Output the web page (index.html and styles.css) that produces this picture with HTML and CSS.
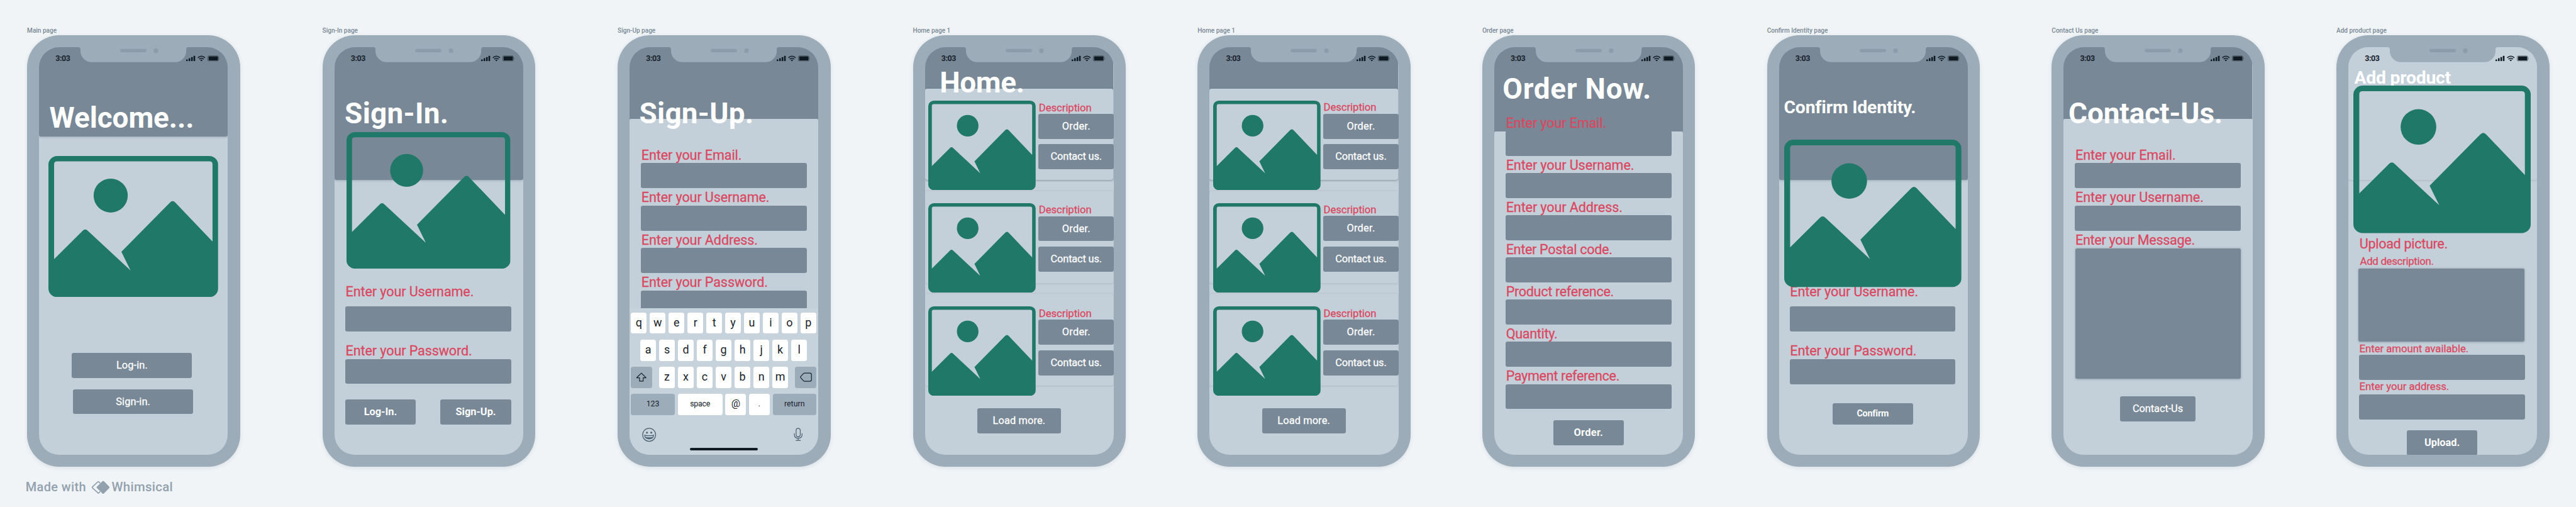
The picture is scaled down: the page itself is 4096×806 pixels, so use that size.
FILE: index.html
```html
<!DOCTYPE html>
<html lang="en">
<head>
<meta charset="utf-8">
<title>Shop app wireframes</title>
<link rel="stylesheet" href="styles.css">
</head>
<body>
<svg class="sprite" aria-hidden="true">
  <symbol id="picture" viewBox="0 0 338 281" preserveAspectRatio="none">
    <path fill-rule="evenodd" d="M18 0H320A18 17 0 0 1 338 17V264A18 17 0 0 1 320 281H18A18 17 0 0 1 0 264V17A18 17 0 0 1 18 0ZM11.3 205.3L68 149Q73.2 143.6 78.6 149L163.6 227.8L145.3 190.6L241.8 93Q247.5 87 253 93L326.8 170.2V16.6Q326.8 10.8 321 10.8H17Q11.3 10.8 11.3 16.6Z"/>
    <ellipse cx="124" cy="78.8" rx="34" ry="33.8"/>
  </symbol>
  <symbol id="notch" viewBox="0 0 220 32">
    <path class="bezel" d="M0 0V1Q5 1 5 6V9A22 22 0 0 0 27 31H193.500A22 22 0 0 0 215.500 9V6Q215.500 1 220 1V0Z"/>
    <rect class="hole" x="84" y="4.700" width="52.500" height="7" rx="3.500"/>
    <circle class="hole" cx="155.300" cy="8.300" r="4.600"/>
  </symbol>
  <symbol id="indicators" viewBox="0 0 67 12">
    <rect x="0" y="8" width="3.200" height="3.600" rx=".8"/>
    <rect x="5" y="5.600" width="3.200" height="6" rx=".8"/>
    <rect x="9.900" y="3.300" width="3.200" height="8.300" rx=".8"/>
    <rect x="14.700" y=".8" width="3.200" height="10.800" rx=".8"/>
    <g class="waves"><path d="M23.300 4.800Q30.400 -1.700 37.500 4.800"/><path d="M26 7.600Q30.400 3.800 34.800 7.600"/></g>
    <path d="M28 9.400Q30.400 7.600 32.800 9.400L30.400 11.800Z"/>
    <rect class="cell" x="43" y=".8" width="21.400" height="10.800" rx="2.600"/>
    <rect x="45" y="2.300" width="18" height="7.800" rx="1"/>
    <path class="nub" d="M65.600 4.300Q67 5 67 6.200T65.600 8.100Z"/>
  </symbol>
</svg>

<main class="board">
  <div class="phones">

    <section class="frame frame--wide">
      <h2 class="frame-name">Main page</h2>
      <div class="phone"><div class="screen s-main">
        <div class="banner"></div>
        <div class="status"><span>3:03</span><svg><use href="#indicators"/></svg></div>
        <svg class="notch"><use href="#notch"/></svg>
        <h1 class="title">Welcome...</h1>
        <svg class="picture"><use href="#picture"/></svg>
        <div class="button login">Log-in.</div>
        <div class="button signin">Sign-in.</div>
      </div></div>
    </section>

    <section class="frame frame--wide">
      <h2 class="frame-name">Sign-In page</h2>
      <div class="phone"><div class="screen s-signin">
        <div class="banner banner--tall"></div>
        <div class="status"><span>3:03</span><svg><use href="#indicators"/></svg></div>
        <svg class="notch"><use href="#notch"/></svg>
        <h1 class="title">Sign-In.</h1>
        <svg class="picture"><use href="#picture"/></svg>
        <div class="credentials">
          <div class="label">Enter your Username.</div><div class="input"></div>
          <div class="label">Enter your Password.</div><div class="input"></div>
        </div>
        <div class="actions"><div class="button button--bold">Log-In.</div><div class="button button--bold">Sign-Up.</div></div>
      </div></div>
    </section>

    <section class="frame frame--wide">
      <h2 class="frame-name">Sign-Up page</h2>
      <div class="phone"><div class="screen s-signup">
        <div class="banner banner--tall"></div>
        <div class="sheet"></div>
        <div class="status"><span>3:03</span><svg><use href="#indicators"/></svg></div>
        <svg class="notch"><use href="#notch"/></svg>
        <h1 class="title">Sign-Up.</h1>
        <div class="form">
          <div class="label">Enter your Email.</div><div class="input"></div>
          <div class="label">Enter your Username.</div><div class="input"></div>
          <div class="label">Enter your Address.</div><div class="input"></div>
          <div class="label">Enter your Password.</div><div class="input"></div>
        </div>
        <div class="keyboard">
          <div class="keys"><b>q</b><b>w</b><b>e</b><b>r</b><b>t</b><b>y</b><b>u</b><b>i</b><b>o</b><b>p</b></div>
          <div class="keys keys--inset"><b>a</b><b>s</b><b>d</b><b>f</b><b>g</b><b>h</b><b>j</b><b>k</b><b>l</b></div>
          <div class="keys">
            <b class="key-fn key-shift"><svg width="22" height="19" viewBox="0 0 22 19"><path d="M11 1.500L20.300 10.700H14.600V17.500H7.400V10.700H1.700Z"/></svg></b>
            <b>z</b><b>x</b><b>c</b><b>v</b><b>b</b><b>n</b><b>m</b>
            <b class="key-fn key-delete"><svg width="24" height="19" viewBox="0 0 24 19"><path d="M9.300 1.300H19.500Q22.900 1.300 22.900 4.700V14.300Q22.900 17.700 19.500 17.700H9.300Q8 17.700 7 16.700L1.600 10.900Q.6 9.500 1.600 8.100L7 2.300Q8 1.300 9.300 1.300Z"/></svg></b>
          </div>
          <div class="keys keys--words"><b class="key-fn">123</b><b class="key-space">space</b><b class="key-sign key-at">@</b><b class="key-sign">.</b><b class="key-fn">return</b></div>
          <div class="tray">
            <svg width="28" height="28" viewBox="0 0 28 28"><circle cx="14" cy="14" r="13"/><circle class="solid" cx="9.700" cy="9.600" r="1.900"/><circle class="solid" cx="18.300" cy="9.600" r="1.900"/><path d="M5 14.800Q14 17 23 14.800Q22.300 22.300 14 22.300T5 14.800Z"/><path class="solid" d="M6.500 18.200Q14 20.300 21.500 18.200Q19 22 14 22T6.500 18.200Z"/></svg>
            <svg width="18" height="27" viewBox="0 0 18 27"><rect x="4.900" y="1.200" width="8.200" height="16.800" rx="4.100"/><path d="M1.400 11V14Q1.400 20.800 9 20.800T16.600 14V11M9 20.800V25M4 25.200H14"/></svg>
          </div>
          <div class="home-bar"></div>
        </div>
      </div></div>
    </section>

    <section class="frame">
      <h2 class="frame-name">Home page 1</h2>
      <div class="phone"><div class="screen s-home">
        <div class="banner banner--tall"></div>
        <div class="status"><span>3:03</span><svg><use href="#indicators"/></svg></div>
        <svg class="notch"><use href="#notch"/></svg>
        <h1 class="title">Home.</h1>
        <div class="cards">
          <article class="card"><svg class="picture"><use href="#picture"/></svg><div class="info"><p>Description</p><div class="button order">Order.</div><div class="button contact">Contact us.</div></div></article>
          <article class="card"><svg class="picture"><use href="#picture"/></svg><div class="info"><p>Description</p><div class="button order">Order.</div><div class="button contact">Contact us.</div></div></article>
          <article class="card"><svg class="picture"><use href="#picture"/></svg><div class="info"><p>Description</p><div class="button order">Order.</div><div class="button contact">Contact us.</div></div></article>
        </div>
        <div class="button load">Load more.</div>
      </div></div>
    </section>

    <section class="frame">
      <h2 class="frame-name">Home page 1</h2>
      <div class="phone"><div class="screen s-home s-home--untitled">
        <div class="banner banner--tall"></div>
        <div class="status"><span>3:03</span><svg><use href="#indicators"/></svg></div>
        <svg class="notch"><use href="#notch"/></svg>
        <div class="cards">
          <article class="card"><svg class="picture"><use href="#picture"/></svg><div class="info"><p>Description</p><div class="button order">Order.</div><div class="button contact">Contact us.</div></div></article>
          <article class="card"><svg class="picture"><use href="#picture"/></svg><div class="info"><p>Description</p><div class="button order">Order.</div><div class="button contact">Contact us.</div></div></article>
          <article class="card"><svg class="picture"><use href="#picture"/></svg><div class="info"><p>Description</p><div class="button order">Order.</div><div class="button contact">Contact us.</div></div></article>
        </div>
        <div class="button load">Load more.</div>
      </div></div>
    </section>

    <section class="frame">
      <h2 class="frame-name">Order page</h2>
      <div class="phone"><div class="screen s-order">
        <div class="banner banner--tall"></div>
        <div class="sheet"></div>
        <div class="status"><span>3:03</span><svg><use href="#indicators"/></svg></div>
        <svg class="notch"><use href="#notch"/></svg>
        <h1 class="title">Order Now.</h1>
        <div class="form">
          <div class="label">Enter your Email.</div><div class="input"></div>
          <div class="label">Enter your Username.</div><div class="input"></div>
          <div class="label">Enter your Address.</div><div class="input"></div>
          <div class="label label--tight">Enter Postal code.</div><div class="input"></div>
          <div class="label label--tight">Product reference.</div><div class="input"></div>
          <div class="label label--tight">Quantity.</div><div class="input"></div>
          <div class="label label--tight">Payment reference.</div><div class="input"></div>
        </div>
        <div class="button button--bold submit">Order.</div>
      </div></div>
    </section>

    <section class="frame">
      <h2 class="frame-name">Confirm Identity page</h2>
      <div class="phone"><div class="screen s-confirm">
        <div class="banner banner--tall"></div>
        <div class="status"><span>3:03</span><svg><use href="#indicators"/></svg></div>
        <svg class="notch"><use href="#notch"/></svg>
        <h1 class="title title--small">Confirm Identity.</h1>
        <svg class="picture"><use href="#picture"/></svg>
        <div class="credentials">
          <div class="label">Enter your Username.</div><div class="input"></div>
          <div class="label">Enter your Password.</div><div class="input"></div>
        </div>
        <div class="button button--bold submit">Confirm</div>
      </div></div>
    </section>

    <section class="frame">
      <h2 class="frame-name">Contact Us page</h2>
      <div class="phone"><div class="screen s-contact">
        <div class="banner banner--tall"></div>
        <div class="sheet"></div>
        <div class="status"><span>3:03</span><svg><use href="#indicators"/></svg></div>
        <svg class="notch"><use href="#notch"/></svg>
        <h1 class="title">Contact-Us.</h1>
        <div class="form">
          <div class="label">Enter your Email.</div><div class="input"></div>
          <div class="label">Enter your Username.</div><div class="input"></div>
          <div class="label label--tight">Enter your Message.</div><div class="textarea"></div>
        </div>
        <div class="button submit">Contact-Us</div>
      </div></div>
    </section>

    <section class="frame">
      <h2 class="frame-name">Add product page</h2>
      <div class="phone"><div class="screen s-add">
        <div class="banner banner--tall banner--light"></div>
        <div class="status"><span>3:03</span><svg><use href="#indicators"/></svg></div>
        <svg class="notch"><use href="#notch"/></svg>
        <h1 class="title title--small">Add product</h1>
        <svg class="picture"><use href="#picture"/></svg>
        <div class="label label--tight">Upload picture.</div>
        <div class="label label--small label--tight">Add description.</div>
        <div class="textarea"></div>
        <div class="label label--small amount">Enter amount available.</div>
        <div class="input"></div>
        <div class="label label--small address">Enter your address.</div>
        <div class="input input--address"></div>
        <div class="button button--bold submit">Upload.</div>
      </div></div>
    </section>

  </div>

  <footer class="credit">
    <span class="made">Made with</span>
    <svg width="37" height="27" viewBox="0 0 37 27"><path class="outline" d="M13.500 2.300Q14.200 1.600 14.900 2.300L26 12.700Q26.700 13.500 26 14.300L14.900 24.700Q14.200 25.400 13.500 24.700L2.300 14.300Q1.600 13.500 2.300 12.700Z"/><path class="gap" d="M22.900 0L9.300 13.500L22.900 27Z"/><path d="M22.400 1.200Q23.900 -.1 25.400 1.200L36.100 12.200Q37.200 13.500 36.100 14.800L25.400 25.800Q23.900 27.100 22.400 25.800L11.200 14.800Q10.100 13.500 11.200 12.200Z"/></svg>
    <span class="brand">Whimsical</span>
  </footer>
</main>
</body>
</html>
```

FILE: styles.css
```css
:root {
  --paper: #f0f4f7;
  --bezel: #9dacb9;
  --screen: #c3cfd9;
  --block: #788896;
  --green: #207868;
  --red: #db4760;
  --ink: #18222c;
}

* { box-sizing: border-box; margin: 0; }

body {
  background: var(--paper);
  font-family: Roboto, "Liberation Sans", sans-serif;
  overflow: hidden;
}

.sprite { display: block; width: 0; height: 0; }

.board {
  zoom: 0.79844;
  width: 5130px;
  height: 1010px;
  padding: 53.7px 0 0 54px;
}

.phones { display: flex; gap: 143px; }
.frame { flex: none; width: 424px; }
.frame--wide { margin-right: 21px; }

.frame-name {
  height: 16px;
  font-size: 12.6px;
  line-height: 16px;
  font-weight: 500;
  color: var(--block);
  white-space: nowrap;
}

.phone {
  height: 860px;
  padding: 24px;
  border-radius: 64px;
  background: var(--bezel);
  box-shadow: 0 2px 8px rgba(40, 60, 80, .1);
}

.screen {
  position: relative;
  width: 376px;
  height: 812px;
  border-radius: 40px;
  background: var(--screen);
  overflow: hidden;
  display: flex;
  flex-direction: column;
  align-items: flex-start;
}

.screen > * { flex: none; }

/* Backdrops and device chrome, layered around the page content */
.banner, .sheet, .status, .notch, .keyboard { position: absolute; left: 0; }

.banner {
  top: 0;
  width: 375.5px;
  height: 178px;
  background: var(--block);
  border-radius: 0 0 3px 3px;
  box-shadow: 0 1px 4px rgba(50, 70, 90, .3);
}
.banner--tall { height: 264px; }
.banner--light { background: var(--screen); box-shadow: 0 1px 4px rgba(50, 70, 90, .16); }

.sheet {
  top: 143.5px;
  width: 376px;
  height: 140px;
  background: var(--screen);
  border-radius: 3px 3px 0 0;
}

.status {
  top: 0;
  width: 376px;
  height: 44px;
  padding: 17px 16.3px 0 32.6px;
  display: flex;
  justify-content: space-between;
  font-size: 15.5px;
  line-height: 13.4px;
  font-weight: 700;
  letter-spacing: -.5px;
  color: var(--ink);
}
.status svg { width: 67px; height: 12px; fill: #0f1922; }
.waves { fill: none; stroke: #0f1922; stroke-width: 1.9; }
.cell { fill: #0f1922; fill-opacity: .3; stroke: #0f1922; stroke-opacity: .35; }
.nub { opacity: .4; }

.notch { top: -1px; left: 77px; width: 220px; height: 32px; }
.bezel { fill: var(--bezel); }
.hole { fill: #8c9caa; }

/* Shared wireframe parts */
.title, .form, .credentials, .label, .picture, .cards, .button { position: relative; }

.title {
  font-size: 57.5px;
  line-height: 60px;
  font-weight: 700;
  color: #fff;
  white-space: nowrap;
}
.title--small { font-size: 35.5px; line-height: 40px; letter-spacing: -.2px; }

.picture { display: block; fill: var(--green); }

.label {
  height: 34px;
  padding-top: 2px;
  font-size: 27px;
  line-height: 32px;
  font-weight: 400;
  letter-spacing: -.12px;
  color: var(--red);
  white-space: nowrap;
}
.label, .info p, .button:not(.button--bold) { -webkit-text-stroke: .35px currentColor; }
.label--tight { letter-spacing: -.38px; }
.label--small { height: 24px; padding: 0; font-size: 21px; line-height: 24px; letter-spacing: -.05px; }
.label--small.label--tight { letter-spacing: -.35px; }

.input { width: 330.5px; height: 50px; border-radius: 4px; background: var(--block); }
.textarea { border-radius: 3px; background: var(--block); box-shadow: 0 1px 4px rgba(50, 70, 90, .35); }

.form .label, .credentials .label { margin-left: 1px; }

.button {
  height: 50px;
  border-radius: 4px;
  background: var(--block);
  color: #fff;
  font-size: 20.5px;
  line-height: 50px;
  font-weight: 400;
  letter-spacing: .15px;
  text-align: center;
  white-space: nowrap;
}
.button--bold { font-weight: 700; letter-spacing: 0; }

/* Main page */
.s-main .title { margin: 112.3px 0 0 20.4px; letter-spacing: -.1px; }
.s-main .picture { width: 338px; height: 281px; margin: 44.7px 0 0 18.8px; }
.s-main .button { width: 239.4px; }
.s-main .login { margin: 111px 0 0 65.2px; }
.s-main .signin { margin: 22px 0 0 67.4px; }

/* Sign-in and identity pages */
.s-signin .title { margin: 102.7px 0 0 20.5px; letter-spacing: .35px; }
.s-signin .picture { width: 326.4px; height: 272px; margin: 7px 0 0 24.3px; }
.credentials .input { margin-bottom: 21px; }
.credentials .label:first-child { margin-bottom: 12.6px; }
.s-signin .credentials { margin: 27.7px 0 0 21.4px; }
.s-signin .actions { display: flex; justify-content: space-between; width: 330.5px; margin: 10px 0 0 21.4px; }
.s-signin .button { width: 140.6px; }

.s-confirm .title { margin: 100.8px 0 0 9.6px; }
.s-confirm .picture { z-index: 1; width: 353px; height: 293.7px; margin: 44px 0 0 10px; }
.s-confirm .credentials { margin: -9.1px 0 0 21px; }
.s-confirm .submit { width: 160.4px; height: 42.5px; margin: 17.8px 0 0 106.4px; font-size: 17.8px; line-height: 42.5px; letter-spacing: -.15px; }

/* Form pages */
.s-signup .title { margin: 103.3px 0 0 19.2px; letter-spacing: .29px; }
.s-signup .form { margin: 33.7px 0 0 22.3px; }
.s-signup .input { margin-bottom: .5px; }

.s-order .sheet { top: 168px; height: 120px; }
.s-order .title { margin: 53.9px 0 0 16.5px; letter-spacing: .92px; }
.s-order .form { margin: 19.1px 0 0 22.3px; }
.s-order .submit { width: 140.5px; margin: 22px 0 0 117.3px; letter-spacing: .45px; }

.s-contact .title { margin: 103.3px 0 0 9.5px; letter-spacing: -.17px; }
.s-contact .form { margin: 33.7px 0 0 22.3px; }
.s-contact .input { margin-bottom: .5px; }
.s-contact .textarea { width: 329px; height: 259px; margin: 1px 0 0 .7px; }
.s-contact .submit { width: 150.6px; margin: 35px 0 0 112px; letter-spacing: -.1px; }

.s-add .title { margin: 41.4px 0 0 11.7px; letter-spacing: -.3px; }
.s-add .picture { width: 353.3px; height: 294px; margin: -4.4px 0 0 9.7px; }
.s-add .label { margin: 3.4px 0 0 22px; }
.s-add .label--small { margin-top: 6.4px; margin-left: 22.5px; }
.s-add .label--small.label--tight { margin-left: 23px; }
.s-add .textarea { width: 330.6px; height: 145px; margin: 2.2px 0 0 20px; }
.s-add .amount { margin-top: 2.8px; margin-left: 21.7px; }
.s-add .address { margin-top: 1.3px; margin-left: 21.7px; }
.s-add .input { margin-left: 21.3px; }
.s-add .input--address { margin-top: 3.7px; }
.s-add .submit { width: 140.4px; margin: 21px 0 0 116.4px; }

/* Home pages */
.s-home .title { z-index: 1; margin: 41.3px 0 0 29.4px; letter-spacing: -.37px; }
.cards { display: flex; flex-direction: column; gap: 22px; width: 376px; margin-top: -19px; }
.s-home--untitled .cards { margin-top: 82.3px; }
.card {
  display: flex;
  gap: 5.6px;
  width: 375.5px;
  height: 182.6px;
  padding: 24.4px 0 0 6.7px;
  border-radius: 4px;
  background: var(--screen);
  box-shadow: 0 1px 4px rgba(50, 70, 90, .14);
}
.card .picture { flex: none; width: 214px; height: 178.3px; }
.info { flex: none; width: 150px; margin-top: 1.9px; }
.card:nth-child(2) .info { margin-top: .9px; }
.card:nth-child(3) .info { margin-top: 2.9px; }
.info p {
  height: 24.4px;
  padding-left: .6px;
  font-size: 21px;
  line-height: 24px;
  font-weight: 400;
  letter-spacing: -.1px;
  color: var(--red);
}
.info .order { letter-spacing: .35px; }
.info .contact { margin-top: 10.6px; letter-spacing: -.2px; }
.load { width: 166.4px; margin: 45px 0 0 104.3px; }

/* On-screen keyboard */
.keyboard {
  top: 519.7px;
  width: 376px;
  height: 292.3px;
  padding: 9.3px 4.3px 0 2.7px;
  background: #c6d2dc;
  color: var(--ink);
}
.keys { display: flex; justify-content: space-between; height: 41.7px; margin-bottom: 12.3px; }
.keys--inset { padding: 0 18.6px 0 18.4px; }
.keys b {
  width: 31.3px;
  padding-bottom: 2px;
  border-radius: 4.5px;
  background: #fff;
  font-size: 22.5px;
  line-height: 40px;
  font-weight: 400;
  text-align: center;
}
.keys .key-fn { background: var(--bezel); }
.keys .key-shift, .keys .key-delete { display: flex; align-items: center; justify-content: center; width: 42px; padding: 0; }
.keys .key-shift { margin-right: 7.4px; }
.keys .key-delete { margin-left: 7.6px; }
.key-fn svg { fill: none; stroke: var(--ink); stroke-width: 1.5; stroke-linejoin: round; }
.keys--words b { width: 87px; font-size: 15.5px; line-height: 42px; padding: 0; }
.keys--words .key-space { width: 89px; letter-spacing: -.3px; }
.keys--words .key-sign { width: 41px; }
.keys--words .key-at { font-size: 20px; line-height: 40px; }
.tray { display: flex; justify-content: space-between; padding: 13.5px 26.6px 0 22.4px; }
.tray svg { fill: none; stroke: #4b5f6e; stroke-width: 1.5; }
.tray .solid { fill: #4b5f6e; stroke: none; }
.home-bar { width: 135px; height: 5px; margin: 11.3px 0 0 117px; border-radius: 3px; background: #0f1a22; }

/* Credit line */
.credit {
  display: flex;
  margin: 26.4px 0 0 -3px;
  font-size: 25px;
  line-height: 30px;
  font-weight: 500;
  letter-spacing: .5px;
  color: #93a1ae;
}
.credit svg { width: 37px; height: 27px; margin: 1.2px 4.4px 0 9.4px; fill: #93a1ae; }
.credit .outline { fill: none; stroke: #93a1ae; stroke-width: 2.2; }
.credit .gap { fill: var(--paper); }
.brand { font-size: 25.5px; letter-spacing: .4px; }
```
